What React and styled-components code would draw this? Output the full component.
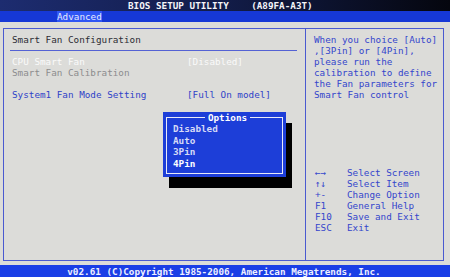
import React from "react"
import styled, { createGlobalStyle } from "styled-components"

const GlobalStyle = createGlobalStyle`
  html, body {
    margin: 0;
    padding: 0;
    background: #dcdcd9;
  }
  * {
    box-sizing: border-box;
  }
`

const Screen = styled.div`
  width: 450px;
  height: 277px;
  display: flex;
  flex-direction: column;
  overflow: hidden;
  font-family: "DejaVu Sans Mono", "Liberation Mono", monospace;
  font-size: 9.3px;
  line-height: 11px;
  background: #dcdcd9;
`

const TitleBar = styled.div`
  height: 11px;
  display: flex;
  align-items: center;
  padding-left: 128px;
  background: linear-gradient(to right, #1d2c70, #121c48 50%, #05060e);
  color: #f4f4f8;
  font-weight: 700;
  white-space: pre;
`

const TabBar = styled.div`
  height: 11px;
  display: flex;
  padding-left: 57px;
  background: #1638d6;
`

const Tab = styled.div`
  display: flex;
  align-items: center;
  background: #2f56f4;
  color: #e6e9ff;
`

const Body = styled.div`
  flex: 1;
  padding: 6px 6px 4px 3px;
`

const Panel = styled.div`
  position: relative;
  height: 100%;
  display: grid;
  grid-template-columns: 302px 1fr;
  border: 1px solid #4a5ad0;
`

const LeftPane = styled.div`
  border-right: 1px solid #4a5ad0;
  padding-top: 5px;
`

const SectionTitle = styled.div`
  padding-left: 8px;
  color: #2c2c34;
`

const Rule = styled.div`
  height: 1px;
  margin: 5px 8px 5px 6px;
  background: #5462d4;
`

const Item = styled.div`
  display: flex;
  height: 11px;
  padding-left: 8px;
  color: ${p =>
    p.$tone === "selected" ? "#fafafa" : p.$tone === "disabled" ? "#8c8c8e" : "#2f42c8"};
  white-space: pre;
`

const Label = styled.span`
  width: 175px;
`

const RightPane = styled.div`
  padding: 5px 0 0 8px;
  color: #3446cc;
`

const Help = styled.div`
  white-space: pre;
`

const Keys = styled.div`
  margin-top: 67px;
`

const KeyRow = styled.div`
  display: flex;
  white-space: pre;
`

const KeyName = styled.span`
  width: 33px;
  padding-left: 1px;
`

const Dialog = styled.div`
  position: absolute;
  left: 159px;
  top: 83px;
  width: 123px;
  height: 65px;
  padding: 0 3px 3px;
  background: #1d3ed8;
  box-shadow: 6px 11px 0 #000;
  color: #dcdff8;
  font-weight: 700;
`

const Frame = styled.fieldset`
  height: 100%;
  margin: 0;
  padding: 0 0 0 6px;
  border: 1px solid #e8eaf8;
`

const FrameTitle = styled.legend`
  margin: 0 auto;
  padding: 0 3px;
  line-height: 11px;
  color: #ffffff;
`

const Option = styled.div`
  line-height: 11.5px;
  color: ${p => (p.$active ? "#ffffff" : "#d6daf6")};
`

const Footer = styled.div`
  height: 12px;
  display: flex;
  align-items: center;
  justify-content: center;
  padding-right: 2px;
  background: #1a3ee6;
  color: #eef0ff;
  font-weight: 700;
  white-space: pre;
`

const items = [
  { label: "CPU Smart Fan", value: "[Disabled]", tone: "selected" },
  { label: "Smart Fan Calibration", value: "", tone: "disabled" },
  { label: "", value: "", tone: "normal" },
  { label: "System1 Fan Mode Setting", value: "[Full On model]", tone: "normal" },
]

const keys = [
  ["\u2190\u2192", "Select Screen"],
  ["\u2191\u2193", "Select Item"],
  ["+-", "Change Option"],
  ["F1", "General Help"],
  ["F10", "Save and Exit"],
  ["ESC", "Exit"],
]

const options = ["Disabled", "Auto", "3Pin", "4Pin"]

export default function App() {
  return (
    <>
      <GlobalStyle />
      <Screen>
        <TitleBar>{"BIOS SETUP UTILITY    (A89FA-A3T)"}</TitleBar>
        <TabBar>
          <Tab>Advanced</Tab>
        </TabBar>
        <Body>
          <Panel>
            <LeftPane>
              <SectionTitle>Smart Fan Configuration</SectionTitle>
              <Rule />
              {items.map((it, i) => (
                <Item key={i} $tone={it.tone}>
                  <Label>{it.label}</Label>
                  <span>{it.value}</span>
                </Item>
              ))}
            </LeftPane>
            <RightPane>
              <Help>
                {"When you choice [Auto]\n,[3Pin] or [4Pin],\nplease run the\ncalibration to define\nthe Fan parameters for\nSmart Fan control"}
              </Help>
              <Keys>
                {keys.map(([k, d]) => (
                  <KeyRow key={k}>
                    <KeyName>{k}</KeyName>
                    <span>{d}</span>
                  </KeyRow>
                ))}
              </Keys>
            </RightPane>
            <Dialog>
              <Frame>
                <FrameTitle>Options</FrameTitle>
                {options.map(o => (
                  <Option key={o} $active={o === "4Pin"}>
                    {o}
                  </Option>
                ))}
              </Frame>
            </Dialog>
          </Panel>
        </Body>
        <Footer>{"v02.61 (C)Copyright 1985-2006, American Megatrends, Inc."}</Footer>
      </Screen>
    </>
  )
}
